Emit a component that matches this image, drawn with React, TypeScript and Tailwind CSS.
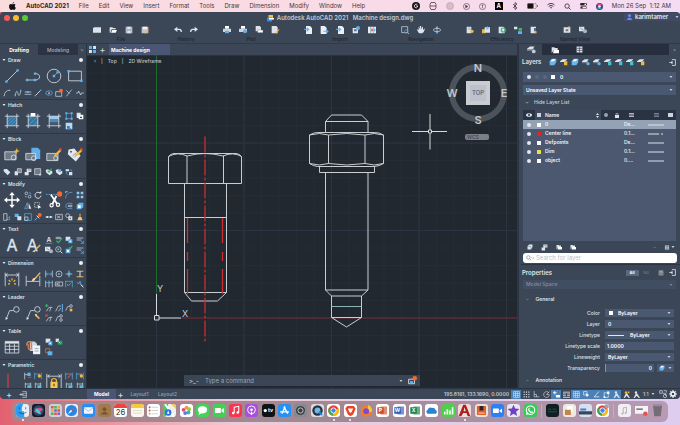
import React, { ReactNode } from "react";
import clsx from "clsx";

const W = "#dde3ea";
const B = "#5eb3ee";
const G = "#3db56c";
const Y = "#f2b73c";
const R = "#e0433c";
const O = "#f4692c";

const pencil = (
  <>
    <path d="M17 3l2 2-6 6-3 1 1-3z" fill={Y} />
    <path d="M16 2l3 3 1-2-2-2z" fill={R} />
  </>
);

const bigIcons: Record<string, ReactNode> = {
  line: (
    <>
      <path d="M3 17L17 3" stroke={W} />
      <path d="M1.500 15.500h3v3h-3zM15.500 1.500h3v3h-3z" fill={B} />
    </>
  ),
  polyline: (
    <>
      <path d="M3 15h10c7 0 7-8 0-8" stroke={W} />
      <path d="M1 13.500h3v3H1zM11 5.500h3v3h-3zM11 13.500h3v3h-3z" fill={B} />
    </>
  ),
  circle: (
    <>
      <circle cx="10" cy="10" r="8.500" stroke={W} />
      <path d="M10 10l5-5" stroke={B} />
      <path d="M8.500 8.500h3v3h-3zM13 4h3v3h-3z" fill={B} />
    </>
  ),
  rectangle: (
    <>
      <path d="M2 4h16v12H2z" stroke={W} />
      <path d="M.5 2.500h3v3h-3zM16.500 14.500h3v3h-3z" fill={B} />
    </>
  ),
  hatch: (
    <>
      <path d="M4 4h12v12H4z" fill="#3c739b" />
      <path d="M4 8l4-4M4 12l8-8M4 16L16 4M8 16l8-8M12 16l4-4" stroke={B} strokeWidth=".7" />
      <path d="M4 1v18M16 1v18M1 4h18M1 16h18" stroke={W} />
    </>
  ),
  boundary: (
    <>
      <path d="M4 4h12v12H4z" fill="#3c739b" />
      <path d="M4 10l6-6M4 16L16 4M10 16l6-6" stroke={B} strokeWidth=".7" />
      <path d="M4 1v18M16 1v18M1 4h18M1 16h18" stroke={W} />
      <path d="M7 0h6v4H7z" fill="#fff" />
    </>
  ),
  gradient: (
    <>
      <path d="M4 4h12v4H4z" fill="#8fcbf3" />
      <path d="M4 8h12v4H4z" fill="#5689b0" />
      <path d="M4 12h12v4H4z" fill="#43576d" />
      <path d="M4 1v18M16 1v18M1 4h18M1 16h18" stroke={W} />
    </>
  ),
  insertBlock: (
    <>
      <path d="M1 6h14v10H1z" fill="#6f7a87" stroke={W} />
      <circle cx="12" cy="13" r="3" stroke={W} />
      <path d="M16 1l1 3 3 1-3 1-1 3-1-3-3-1 3-1z" fill={Y} />
    </>
  ),
  createBlock: (
    <>
      <path d="M8 1h8l3 3v11H8z" fill="#63aee8" />
      <path d="M1 8h12v8H1z" fill="#6f7a87" stroke={W} />
      <circle cx="11" cy="14" r="3" stroke={W} />
    </>
  ),
  editBlock: (
    <>
      <path d="M1 8h14v9H1z" fill="#6f7a87" stroke={W} />
      <circle cx="12" cy="14" r="2.500" stroke={W} />
      {pencil}
    </>
  ),
  editAttribute: (
    <>
      <path d="M2 3l7-1 8 9-6 7L1 9z" fill="#e4e7ea" />
      <circle cx="5" cy="6" r="1.200" fill="#4b5666" />
      <path d="M7 11l5-4M9 13l4-4" stroke="#7d8792" />
      {pencil}
    </>
  ),
  move: (
    <>
      <path d="M10 2v16M2 10h16" stroke="#fff" strokeWidth="1.800" />
      <path d="M10 0l3.500 4h-7zM10 20l3.500-4h-7zM0 10l4-3.500v7zM20 10l-4-3.500v7z" fill="#fff" />
    </>
  ),
  trim: (
    <>
      <path d="M0 3h14" stroke={B} strokeDasharray="2 1" />
      <path d="M6 3l8 12M13 5L8 15" stroke="#fff" strokeWidth="2.200" />
      <circle cx="7" cy="16.500" r="2" stroke="#fff" strokeWidth="1.500" />
      <circle cx="15" cy="16" r="2" stroke="#fff" strokeWidth="1.500" />
      <circle cx="17" cy="2.500" r="3.300" fill={O} />
    </>
  ),
  text: (
    <text x="10" y="17.500" fontSize="20" textAnchor="middle" fill={W} stroke={W} strokeWidth=".5" fontFamily="Inter, sans-serif">
      A
    </text>
  ),
  textStyle: (
    <>
      <text x="9" y="17" fontSize="20" textAnchor="middle" fill={W} stroke={W} strokeWidth=".4" fontFamily="Inter, sans-serif">
        A
      </text>
      <path d="M19 10l-6 6" stroke="#e9b36b" strokeWidth="1.800" />
      <path d="M14 15l-2 4-3-1z" fill="#f3d9a8" />
    </>
  ),
  dimension: (
    <>
      <path d="M1.500 2v17M18.500 2v17M2 5h16M4.500 3L2 5l2.500 2M15.500 3L18 5l-2.500 2" stroke={W} />
      <path d="M10 9v3M6 11l2 2.500M14 11l-2 2.500M5 16h2.500M12.500 16H15" stroke={Y} strokeWidth="1.500" />
    </>
  ),
  dimensionStyle: (
    <>
      <path d="M1.500 6v13M18.500 6v13M2 13h16" stroke={W} />
      <path d="M19 2l-6 7" stroke="#e9b36b" strokeWidth="1.800" />
      <path d="M14 8l-2 4-4 1 2-4z" fill="#f3d9a8" />
    </>
  ),
  leader: (
    <>
      <path d="M3 17L7 7h5" stroke={W} />
      <circle cx="15.500" cy="5.500" r="3.500" stroke={W} />
      <path d="M2 19l0-4 3 1.500z" fill={W} />
    </>
  ),
  leaderStyle: (
    <>
      <path d="M3 17L7 7h5" stroke={W} />
      <circle cx="15.500" cy="5.500" r="3.500" stroke={W} />
      <path d="M2 19l0-4 3 1.500z" fill={W} />
      <path d="M13 12l5 5" stroke="#e9b36b" strokeWidth="2" />
      <path d="M12 11l3 1-1 3z" fill="#f3d9a8" />
    </>
  ),
  table: (
    <>
      <path d="M1.500 3h17v14.500h-17z" stroke={W} />
      <path d="M1.500 4.500h17" stroke={W} strokeWidth="2.500" />
      <path d="M1.500 9h17M1.500 13h17M7 6v11M13 6v11" stroke={W} />
    </>
  ),
  dataLink: (
    <>
      <path d="M6 3h6l3 3v9H6z" fill="#cfd5dc" />
      <path d="M10 8h9v11h-9z" fill="#f1f3f5" />
      <path d="M12 12h5M12 15h5" stroke="#8e98a5" />
      <path d="M2 8c0-6 6-6 6-2v5c0 3-4 3-4 0V6" stroke="#d98250" strokeWidth="1.500" />
    </>
  ),
  constraintLine: <path d="M5 1v18" stroke={R} strokeWidth="1.400" />,
  lock: (
    <>
      <path d="M1 1v18M19 1v18M2 4h16M4.500 2L2 4l2.500 2M15.500 2L18 4l-2.500 2" stroke={W} />
      <path d="M7 12V9.500c0-3.500 6-3.500 6 0V12" stroke={Y} strokeWidth="1.500" />
      <path d="M5.500 11h9v8h-9z" fill="#f5c64d" />
      <path d="M10 13.500v3" stroke="#5b4a1a" strokeWidth="1.500" />
    </>
  ),
};

const smallIcons: Record<string, ReactNode> = {
  arc: <><path d="M2 10c0-5 3-8 8-8" stroke={W} /><path d="M1 9h2v2H1zM9 1h2v2H9z" fill={B} /></>,
  spline: <><path d="M2 10c1-8 3-8 4-3s3 3 4-4" stroke={W} /><path d="M1 8h2v3H1zM9 1h2v3H9z" fill={B} /></>,
  construction: <><path d="M1 4.500h10M1 8h10" stroke={W} /><path d="M4 3h3v3H4z" fill={B} /></>,
  ray: <><path d="M2 10l8-8" stroke={W} strokeWidth="1.300" /><path d="M1 9h2v2H1zM9 1h2v2H9z" fill={B} /></>,
  ellipse: <><ellipse cx="6" cy="6" rx="5" ry="3.300" stroke={B} /><circle cx="6" cy="6" r="1.300" fill={W} /></>,
  wipeout: <><path d="M1 4h9v7H1z" stroke={W} /><circle cx="9" cy="2.500" r="3" fill={O} /></>,
  point: <><path d="M2 2l4 4 4-5M6 6l-4 5" stroke={W} /><path d="M5 5h2v2H5z" fill={B} /></>,
  breakline: <path d="M0 6h3l1-3 3 6 1-3h4" stroke={W} />,
  region: <><path d="M2 2h8v8H2z" stroke={B} /><path d="M.5.5h3v3h-3zM8.500.5h3v3h-3zM.5 8.500h3v3h-3zM8.500 8.500h3v3h-3z" fill={B} /></>,
  docs: <><path d="M1 1h6v8H1z" fill={W} /><path d="M4 4h7v7H4z" fill="#fff" /><path d="M6 7h3v2H6z" fill="#3d4858" /></>,
  cloud: <><path d="M1 1h10v10H1z" fill="#b8d9f1" /><path d="M3 6h4v3h2v1H3z" fill="#2f7fc0" /></>,
  tag: <><path d="M1 2l5-.5 5 5-4 4.500-6-6z" fill={W} /></>,
  attr: <><path d="M1 5h5v6H1z" fill={W} /><path d="M5 1h6v6H5z" stroke={W} fill="#7a8593" /></>,
  attrEdit: <><path d="M1 6h6v5H1zM4 1h7v5H4z" fill={W} /><path d="M6 3h4" stroke="#49566a" /></>,
  editor: <><path d="M1 1h9v9H1z" stroke={W} fill="#6d7888" /><path d="M9 8v4M7 10h4" stroke={W} /></>,
  check: <><path d="M1 3l3-1 7 3v3l-4 3-5-4z" fill={W} /><path d="M4 4l2 2 4-5" stroke={G} strokeWidth="1.800" /></>,
  sync: <><path d="M1 3l3-1 7 3v3l-4 3-5-4z" fill={W} /><path d="M5 2h4v4H5z" fill={B} /></>,
  purge: <><path d="M1 2h5v3H1zM6 6h5v5H6z" fill={W} /><path d="M2 6c0 3 1 4 3 4M7 3h3v2" stroke={B} /></>,
  copy: <><circle cx="3.500" cy="3.500" r="2" stroke={W} /><circle cx="8.500" cy="8.500" r="2" stroke={W} /><path d="M7 3h3v2M5 9H2V7" stroke={B} /></>,
  rotate: <><path d="M9.500 3.500A4.500 4.500 0 1 0 10.500 7" stroke={W} strokeWidth="1.400" /><path d="M7 3.500h4V0z" fill={W} /></>,
  mirror: <><path d="M5 1v9H1z" stroke={B} /><path d="M7 1v9h4z" fill={W} /></>,
  stretch: <><path d="M1 1h7v7H1z" stroke={W} strokeDasharray="2 1" /><path d="M5 4l6 4-3 .5L7 11z" fill="#fff" /></>,
  fillet: <><path d="M1 11C1 5 5 2 11 2" stroke={B} /><path d="M1 3v-2h3" stroke={W} /></>,
  array: <path d="M1 1h4v4H1zM7 1h4v4H7zM1 7h4v4H1zM7 7h4v4H7z" fill="#8bc8f2" />,
  offset: <><path d="M11 2H5c-5 0-5 8 0 8h6" stroke={B} /><path d="M11 5H6c-2 0-2 2 0 2h5" stroke={W} /></>,
  erase: <><path d="M1 4l4-3h6v7l-4 3H1z" fill={B} /><path d="M3 5h4v4H3z" fill="#fff" /></>,
  align: <><path d="M1 1h5v10H1z" stroke={W} /><path d="M5 10l5-5v5z" stroke={B} /></>,
  scale: <><path d="M1 1h6v5H1z" fill={B} /><path d="M5 5h6v6H5z" fill={W} /></>,
  corner: <><path d="M1 1h10v10H1z" stroke={B} /><path d="M1 6h5v5H1z" stroke={W} /></>,
  explode: <><path d="M1 11l4-4" stroke={B} strokeWidth="1.500" /><path d="M4 4l4 4" stroke={W} strokeWidth="1.500" /><circle cx="8.500" cy="3" r="3" fill={O} /></>,
  join: <><path d="M0 6h12" stroke={B} /><path d="M2 4.500h3v3H2zM7 4.500h3v3H7z" fill={W} /></>,
  reverse: <><path d="M1 2h10v8H1z" stroke={W} /><path d="M3 4l5 4M8 4L3 8" stroke={W} /></>,
  divide: <><circle cx="4" cy="4" r="3" stroke={W} /><path d="M5 5h6v6H5z" fill={W} /><path d="M7 7h2v2H7z" fill="#49566a" /></>,
  brush: <><path d="M6 1v5" stroke="#e9b36b" strokeWidth="1.500" /><path d="M4 6h4l2 5H2z" fill="#f2c46f" /></>,
  singleText: <><text x="6" y="9" fontSize="10" fontWeight="600" textAnchor="middle" fill={W} fontFamily="Inter, sans-serif">A</text><path d="M1 11h10" stroke={B} /></>,
  spell: <><path d="M1 2h8M1 4h8" stroke={W} /><path d="M2 7l3 3 6-7" stroke={G} strokeWidth="1.600" /></>,
  field: <><path d="M1 1h7v6H1z" fill={W} /><path d="M5 5h6v6H5z" fill={B} /><path d="M7 7h2v2H7z" fill="#fff" /></>,
  textAlign: <><path d="M1 3h10M1 6h7" stroke={W} /><path d="M7 7l4 4M11 7v4H7" stroke={B} /></>,
  find: <><circle cx="5" cy="5" r="4" stroke={W} /><path d="M8 8l3 3" stroke={W} strokeWidth="1.500" /><circle cx="5" cy="5" r="1.500" fill={B} /></>,
  green: <><path d="M1 4h7v7H1z" fill={B} /><path d="M6 2l2 2 3-4" stroke={G} strokeWidth="1.800" /><path d="M3 6h3v3H3z" fill="#fff" /></>,
  linear: <><path d="M1 1v10M11 1v10" stroke={W} /><path d="M1 6h10M4 4L2 6l2 2M8 4l2 2-2 2" stroke={B} /></>,
  baseline: <><path d="M1 1v10M6 1v10M11 1v10" stroke={W} /><path d="M1 4h10" stroke={B} strokeWidth="1.300" /></>,
  diameter: <><circle cx="6" cy="6" r="4.500" stroke={W} /><circle cx="6" cy="6" r="1.500" fill={B} /></>,
  ordinate: <><path d="M6 1v10M1 6h10" stroke={W} /><path d="M4 4h4v4H4z" fill={B} /></>,
  space: <><path d="M1 2h10M1 10h10" stroke={Y} strokeWidth="1.600" /><path d="M6 2v8" stroke={W} strokeWidth="1.500" /></>,
  tolerance: <><path d="M.5 3h11v6H.5z" stroke={W} /><path d="M6 3v6" stroke={W} /><circle cx="3.300" cy="6" r="1.300" fill={W} /></>,
  inspect: <><path d="M1 1v10M11 1v10M1 2h10" stroke={B} /><path d="M3 6l2 3 4-5" stroke={G} strokeWidth="1.500" /></>,
  jog: <><path d="M1 3l3 3 2-4 2 6 3 1" stroke={B} strokeWidth="1.200" /><path d="M7 7l4 4" stroke={W} strokeWidth="1.400" /></>,
  leaderAdd: <><path d="M2 11l4-6h5M7 11l2-6" stroke={W} /><path d="M2.500 0v5M0 2.500h5" stroke={G} strokeWidth="1.600" /></>,
  leaderRemove: <><path d="M2 11l4-6h5M7 11l2-6" stroke={W} /><path d="M.5.5l3.500 3.500M4 .5L.5 4" stroke={R} strokeWidth="1.600" /></>,
  leaderAlign: <><path d="M1 11l4-8h4M5 11l4-5" stroke={W} /><path d="M11 0v12" stroke={B} strokeWidth="1.500" /></>,
  leaderCollect: <><path d="M1 10l3-6h3" stroke={W} /><circle cx="9" cy="3" r="2" stroke={W} /><path d="M7 7h4v4H7z" fill={Y} /></>,
  leaderPair: <><path d="M1 11l3-7h3" stroke={W} /><circle cx="9" cy="3" r="2" stroke={W} /><circle cx="9" cy="9" r="2" stroke={W} /></>,
  clip: <><path d="M1 1h6v6H1z" stroke="#d98250" /><path d="M4 5h7v6H4z" fill={B} /></>,
  excel: <><path d="M1 1h5v5H1z" fill={W} /><path d="M4 4h7v6H4z" fill="#2f9c62" /><path d="M5 5l3 3" stroke="#fff" /></>,
  geo: <><path d="M1 1v10M1 4h5" stroke={W} /><path d="M5 1h5v5H5z" fill={B} /><path d="M6 8h5" stroke={R} strokeWidth="1.600" /></>,
  bracket: <><path d="M2 1v10M10 1v10M2 3h8" stroke={W} /><path d="M5 5h6v5H5z" fill="#4fc0d9" /></>,
  dimRed: <><path d="M1 1v10M11 1v10M1 3h10" stroke={B} /><path d="M4 9l5-5" stroke={R} strokeWidth="1.800" /></>,
  dimBulb: <><path d="M1 1v10M11 1v10M1 3h8" stroke={B} /><circle cx="8" cy="6" r="2.500" fill={Y} /></>,
  // top toolbar
  newFile: <path d="M0 3l2-1h10v8H0z" fill={W} />,
  open: <><path d="M1 2h4l1 1h4v2H4L2 10H1z" fill={W} /><path d="M5 6h7l-2 4H3z" fill="#fff" /></>,
  save: <><path d="M1 1h10v10H1z" fill="#bfc6cf" /><path d="M3 1h6v4H3zM3 7h6v4H3z" fill="#e9edf1" stroke="#768293" strokeWidth=".6" /></>,
  saveAs: <><path d="M1 1h10v10H1z" fill="#bfc6cf" /><path d="M3 1h6v4H3z" fill="#eef1f4" /><path d="M11 5l-5 6" stroke={Y} strokeWidth="2" /><path d="M11 4l1 1" stroke={R} strokeWidth="2" /></>,
  undo: <><path d="M4 5h4c2 0 3 2 3 4" stroke={W} strokeWidth="2" /><path d="M0 5l5-4v8z" fill={W} /></>,
  redo: <><path d="M8 5H4C2 5 1 7 1 9" stroke={W} strokeWidth="2" /><path d="M12 5L7 1v8z" fill={W} /></>,
  print: <><path d="M3 0h6v4H3z" fill="#fff" /><path d="M0 4h12v5H0z" fill="#cfd5dc" /><path d="M3 7h6v4H3z" fill={B} /></>,
  preview: <><path d="M3 0h6v4H3z" fill="#fff" /><path d="M0 4h12v5H0z" fill="#cfd5dc" /><circle cx="9" cy="8" r="3" fill={B} /></>,
  batch: <><path d="M1 0h6l2 2v6H1z" fill={W} /><path d="M4 6h8v4H4z" fill="#fff" stroke="#55606f" strokeWidth=".6" /></>,
  pageSetup: <><path d="M1 0h7l2 2v9H1z" fill={W} /><path d="M12 5l-5 6" stroke={Y} strokeWidth="2" /><path d="M11 5l1 1" stroke={R} strokeWidth="2" /></>,
  importIn: <><path d="M3 0h6l3 3v9H3z" fill="#edf0f3" /><path d="M0 5h6M4 3l3 2-3 3" stroke={B} strokeWidth="1.600" /></>,
  exportOut: <><path d="M1 0h6l3 3v9H1z" fill="#edf0f3" /><path d="M5 8h6M9 6l3 2-3 3" stroke={B} strokeWidth="1.600" /></>,
  palette: <><path d="M1 3h8v8H1z" fill={W} /><path d="M3 5h4v3H3z" fill="#617084" /><circle cx="9" cy="3" r="3" fill={B} /></>,
  sheets: <><path d="M0 1h12v10H0z" fill="#e9ecef" /><path d="M4 1v10M8 1v10" stroke="#8792a0" /><path d="M5 4h2v4H5z" fill={R} /><path d="M9 4h2v4H9z" fill={B} /></>,
  zoomWindow: <><path d="M1 1h9v9H1z" stroke={W} /><circle cx="8" cy="8" r="2.500" stroke={B} /><path d="M10 10l2 2" stroke={W} /></>,
  hand: <path d="M3 11L0 6l1-1 2 1-1-4h1l2 3-1-5h2l1 5 1-4h1l0 5 2-2 1 0-2 5-2 2z" fill={W} />,
  orbit: <><ellipse cx="6" cy="6" rx="5.500" ry="2.500" stroke={W} /><path d="M6 1v10" stroke={W} /><path d="M6 0l2 3H4zM6 12l2-3H4z" fill={B} /></>,
  bulb: <><path d="M1 1h7v10H1z" fill={W} /><path d="M3 3h4M3 5h4" stroke={B} /><circle cx="9" cy="8" r="2.500" fill={Y} /></>,
  share: <><path d="M0 5h5v6H0z" fill={Y} /><path d="M4 2h8v8H4z" fill={W} /><path d="M8 0v5M6 3l2 2 2-2" stroke={B} /></>,
  refresh: <><path d="M1 1h7l2 2v8H1z" fill={W} /><circle cx="8" cy="6" r="3" stroke={G} strokeWidth="1.800" /></>,
  compare: <><path d="M0 1h5v4H0z" fill={W} /><path d="M7 3h5v4H7z" fill={G} /><path d="M6 8h6v4H6z" fill={B} /></>,
  clean: <><path d="M1 1h8v10H1z" fill={W} /><path d="M6 3h3v5H6z" fill="#5c6878" /><path d="M7 8h3v3H7z" fill="#dca766" /></>,
  viewSave: <><path d="M1 2h10v8H1z" fill={W} /><path d="M4 5h4v3H4z" fill="#6a7788" /><path d="M9 0v4M7 2h4" stroke={Y} strokeWidth="1.300" /></>,
  viewEdit: <><path d="M0 1h8v7H0z" fill={W} /><circle cx="9" cy="8" r="3" fill="#aab4c0" /><path d="M2 3l4 3" stroke="#667385" /></>,
  // layer panel
  layer: <><path d="M1 5l3-4h7v5l-3 5H1z" fill={W} /><path d="M1 5h7v6" stroke="#7f8b9b" /></>,
  layerBlue: <><path d="M1 5l3-4h7v5l-3 5H1z" fill="#6bb6ea" /><path d="M2 5l3-3h5l-3 3z" fill="#fff" /></>,
  layerDot: <><path d="M0 5l4-3h6l-3 4H0z" fill={W} /><path d="M0 7h7l2-3" stroke="#9aa6b5" /><circle cx="9" cy="8.500" r="2.500" fill={B} /></>,
  layerTab: <><path d="M0 5l4-3h6l-3 4H0z" fill={W} /><path d="M0 7h7l2-3" stroke="#9aa6b5" /><circle cx="9" cy="8.500" r="2.500" fill="#c3cad3" /></>,
  layerTeal: <><path d="M0 5l4-3h7l-4 4H0z" fill={W} /><path d="M6 5h5v6H6z" fill="#45c1cf" /></>,
  layerGold: <><path d="M0 5l4-3h7l-4 4H0z" fill={W} /><path d="M6 5h5v6H6z" fill={Y} /></>,
  folder: <><path d="M1 2h4l1 1h4v3H4l-3 5z" fill={W} /><path d="M4 6h8v5H3z" fill="#fff" /></>,
  dock: <><path d="M5 1h6v10H5" stroke={W} strokeWidth="1.400" /><path d="M6 3v6L2 6z" fill={W} /><path d="M0 6h6" stroke={W} /></>,
  list: <><path d="M1 1h10v10H1z" fill={W} /><path d="M1 4h10M1 7.500h10M6 2v9" stroke="#2a3342" /></>,
  grid: <path d="M1 1h10v10H1zM1 4.300h10M1 7.600h10M4.300 1v10M7.600 1v10" stroke={W} />,
  dots: <path d="M1 1h2v2H1zM5 1h2v2H5zM9 1h2v2H9zM1 5h2v2H1zM5 5h2v2H5zM9 5h2v2H9zM1 9h2v2H1zM5 9h2v2H5zM9 9h2v2H9z" fill={W} />,
  ortho: <path d="M2 0v10h9M2 6h4v4" stroke={W} />,
  polar: <><path d="M10 3A5 5 0 1 0 11 7" stroke={W} /><path d="M6 6l5-5M6 6h5" stroke={W} /></>,
  dynamic: <><path d="M3 0v6M0 3h6" stroke="#fff" strokeWidth="1.500" /><path d="M5 7h7v4H5z" fill="#fff" /></>,
  weight: <path d="M0 2h12M0 5h5M7 5h5M0 8h5M7 8h5M0 11h12" stroke={W} strokeWidth="1.400" />,
  panels: <><path d="M4 1h7v10H4M4 4h7M4 8h7" stroke={W} /><path d="M0 6h6M2 4L0 6l2 2" stroke={W} strokeWidth="1.300" /></>,
  snap: <><path d="M1 1h6v6H1z" stroke="#fff" /><path d="M4 4l7 3-3 1-1 3z" fill="#fff" /></>,
  angle: <path d="M2 10h9M2 10l8-9" stroke="#fff" strokeWidth="1.200" />,
  box: <><path d="M2 3h7v8H2z" stroke="#fff" /><path d="M7 1h4v4H7zM1 9h3v3H1z" fill="#fff" /></>,
  person: <><circle cx="5" cy="2.500" r="2" fill={W} /><path d="M5 4l-4 8h2l3-4 4 4h2L7 4z" fill={W} /></>,
  personGold: <><circle cx="5" cy="2.500" r="2" fill={Y} /><path d="M5 4l-4 8h2l3-4 4 4h2L7 4z" fill={W} /><path d="M8 1h3v3H8z" fill={Y} /></>,
  isolate: <><path d="M1 1h4v4H1zM6 5h4v4" stroke={W} /><circle cx="9" cy="9" r="2.500" stroke={W} /><path d="M7 1h4v3" stroke={W} /></>,
  gear: <><circle cx="6" cy="6" r="3" stroke="#fff" strokeWidth="2" /><path d="M6 0v3M6 9v3M0 6h3M9 6h3M2 2l2 2M8 8l2 2M10 2L8 4M4 8l-2 2" stroke="#fff" strokeWidth="1.600" /></>,
};

function Icon({ name, className = "size-[9px]" }: { name: string; className?: string }) {
  const big = name in bigIcons;
  return (
    <svg viewBox={big ? "0 0 20 20" : "0 0 12 12"} fill="none" className={clsx("shrink-0 overflow-visible", className)} aria-hidden="true">
      {big ? bigIcons[name] : smallIcons[name]}
    </svg>
  );
}

const Caret = ({ className = "text-[#c9d1dc]" }: { className?: string }) => (
  <svg viewBox="0 0 6 4" className={clsx("h-[2px] w-[4px] shrink-0", className)} aria-hidden="true">
    <path d="M0 0h6L3 4z" fill="currentColor" />
  </svg>
);

const menus = ["File", "Edit", "View", "Insert", "Format", "Tools", "Draw", "Dimension", "Modify", "Window", "Help"];

function MenuBar() {
  return (
    <header className="flex h-[12px] shrink-0 items-center bg-linear-to-r from-[#fbdcdc] via-[#fadbe6] to-[#f3dcf5] pl-[9px] pr-[9px] text-[6px] leading-[8px] text-[#3f383c]">
      <svg viewBox="0 0 14 16" className="mr-[10px] h-[8px] w-[7px]" aria-label="Apple">
        <path d="M10 0c0 2-1.500 3.500-3 3.500C7 2 8.500.5 10 0zM7 4.500C8 4.500 9 3.700 10.300 3.800c1.200 0 2.200.6 2.900 1.600-2.500 1.500-2 5 .6 6-.8 2.300-2.200 4.400-3.700 4.400-1 0-1.600-.6-2.800-.6s-1.800.6-2.800.6C2.200 15.800 0 12 0 8.800c0-3.200 1.900-4.900 3.900-4.900C5.200 3.900 6 4.500 7 4.500z" fill="#111" />
      </svg>
      <nav className="flex flex-1 gap-[10px]">
        <button className="font-bold text-[#2a2226]">AutoCAD 2021</button>
        {menus.map((menu) => (
          <button key={menu}>{menu}</button>
        ))}
      </nav>
      <div className="flex items-center gap-[9px]">
        <svg viewBox="0 0 16 16" className="size-[8px]"><circle cx="8" cy="8" r="8" fill="#1d181b" /><path d="M11 6a3.500 3.500 0 1 0 0 4V8H8" fill="none" stroke="#fff" strokeWidth="1.500" /></svg>
        <svg viewBox="0 0 16 16" className="size-[8px]" fill="none" stroke="#40373c" strokeWidth="1.500"><path d="M4 1h8l2 4v6l-2 4H4l-2-4V5zM2 8h12" /></svg>
        <svg viewBox="0 0 16 16" className="size-[8px]"><circle cx="8" cy="8" r="7" fill="#d8bdc8" stroke="#ad929d" /></svg>
        <svg viewBox="0 0 16 16" className="size-[7px]" fill="none" stroke="#5a4d54" strokeWidth="1.500"><circle cx="8" cy="8" r="7" /><path d="M6 5l5 3-5 3z" fill="#40373c" /></svg>
        <svg viewBox="0 0 16 16" className="size-[7px]" fill="none" stroke="#5a4d54" strokeWidth="1.500"><circle cx="8" cy="8" r="7" /><path d="M8 4v8M6 5h4" /></svg>
        <span className="flex size-[8px] items-center justify-center bg-black text-[6px] font-bold text-white">A</span>
        <svg viewBox="0 0 12 16" className="h-[8px] w-[6px]" fill="none" stroke="#2c2429" strokeWidth="1.400"><path d="M2 4l8 8-4 3V1l4 3-8 8" /></svg>
        <svg viewBox="0 0 22 12" className="h-[6px] w-[11px]"><rect x=".5" y=".5" width="18" height="11" rx="3" fill="none" stroke="#685a62" /><rect x="1" y="1" width="12" height="10" rx="2" fill="#17120f" /><path d="M20 4v4l2-1V5z" fill="#685a62" /></svg>
        <svg viewBox="0 0 16 12" className="h-[6px] w-[8px]" fill="none" stroke="#2c2429" strokeWidth="1.800"><path d="M1 4c4-4 10-4 14 0M3.500 7c3-2.500 6-2.500 9 0M6 10c1.500-1 2.500-1 4 0" /></svg>
        <svg viewBox="0 0 16 16" className="size-[7px]" fill="none" stroke="#2c2429" strokeWidth="1.800"><circle cx="7" cy="7" r="5" /><path d="M11 11l4 4" /></svg>
        <svg viewBox="0 0 16 14" className="h-[6px] w-[7px]"><rect width="16" height="6" rx="3" fill="#2c2429" /><circle cx="12" cy="3" r="2" fill="#fff" /><rect x=".7" y="8" width="14.600" height="5.500" rx="2.700" fill="none" stroke="#2c2429" strokeWidth="1.400" /><circle cx="4" cy="10.700" r="2" fill="#2c2429" /></svg>
        <svg viewBox="0 0 16 16" className="size-[7px]"><circle cx="8" cy="8" r="8" fill="#4b3b7d" /><path d="M2 5a7 7 0 0 1 12 0z" fill="#e2507e" /><path d="M2 10a7 7 0 0 0 11 2z" fill="#2fb6e6" /><circle cx="8" cy="8" r="3" fill="#fff" /></svg>
        <time className="whitespace-pre">Mon 26 Sep  1:12 AM</time>
      </div>
    </header>
  );
}

const toolGroups = [
  { label: "File", icons: ["newFile", "open", "save", "saveAs"] },
  { label: "History", icons: ["undo", "redo"] },
  { label: "Plot", icons: ["print", "preview", "batch", "pageSetup"] },
  { label: "Import", icons: ["importIn", "exportOut", "importIn", "palette", "sheets"] },
  { label: "Navigation", icons: ["zoomWindow", "hand", "orbit"] },
  { label: "Efficiency", icons: ["bulb", "share", "refresh", "compare", "clean"] },
  { label: "Named View", icons: ["viewSave", "viewEdit"] },
];

function TitleBar() {
  return (
    <div className="flex h-[12px] shrink-0 items-start pl-[4px]">
      <div className="flex w-[52px] gap-[3px] pt-[3px]">
        <button aria-label="Close" className="size-[6px] rounded-full bg-[#fb5a52]" />
        <button aria-label="Minimize" className="size-[6px] rounded-full bg-[#f9bb34]" />
        <button aria-label="Full screen" className="size-[6px] rounded-full bg-[#5cc83b]" />
      </div>
      <h1 className="flex flex-1 items-center justify-center gap-[3px] whitespace-pre pt-[2px] text-[6px] leading-[8px] font-semibold text-[#c3cad4]">
        <svg viewBox="0 0 14 14" className="size-[7px]"><path d="M3 0h9v9H3z" fill="#f2c14a" /><path d="M0 5h10v8H0z" fill="#3a8fd6" /><path d="M4 6h10v3H4z" fill="#fff" /></svg>
        Autodesk AutoCAD 2021   Machine design.dwg
      </h1>
      <button className="mt-[1px] flex h-[8px] w-[56px] items-center gap-[3px] bg-[#414b66] pl-[3px] pr-[1px] text-[6px] leading-[8px] font-semibold text-[#e3e7ee]">
        <svg viewBox="0 0 10 12" className="h-[6px] w-[5px]"><circle cx="5" cy="3" r="3" fill="#5f8df5" /><path d="M0 12c0-7 10-7 10 0z" fill="#5f8df5" /></svg>
        <span className="flex-1 text-left">karimtamer</span>
        <Caret />
      </button>
    </div>
  );
}

function Toolbar() {
  return (
    <div className="flex h-[20px] shrink-0 gap-[17px] border-b border-[#303a49] pl-[89px]">
      {toolGroups.map((group) => (
        <div key={group.label} className="flex flex-col items-center">
          <div className="flex h-[12px]">
            {group.icons.map((icon, i) => (
              <button key={i} aria-label={group.label} className="flex w-[16px] items-center justify-center">
                <Icon name={icon} className="size-[8px]" />
              </button>
            ))}
          </div>
          <span className="text-[5px] leading-[6px] font-medium text-[#1f2733]">{group.label}</span>
        </div>
      ))}
    </div>
  );
}

// icons flow over eight columns, large ones take two columns and two rows
const sections = [
  { title: "Draw", tall: true, icons: ["line", "polyline", "circle", "rectangle", "arc", "spline", "construction", "ray", "ellipse", "wipeout", "point", "breakline"] },
  { title: "Hatch", icons: ["hatch", "boundary", "gradient", "region", "docs", "cloud"] },
  { title: "Block", tall: true, icons: ["insertBlock", "createBlock", "editBlock", "editAttribute", "tag", "attr", "attrEdit", "editor", "check", "sync", "purge"] },
  { title: "Modify", tall: true, icons: ["move", "copy", "rotate", "trim", "fillet", "array", "mirror", "stretch", "offset", "erase", "align", "scale", "corner", "explode", "join", "reverse", "divide", "brush"] },
  { title: "Text", icons: ["text", "textStyle", "singleText", "spell", "field", "textAlign", "viewEdit", "find", "green", "textAlign"] },
  { title: "Dimension", icons: ["dimension", "dimensionStyle", "linear", "diameter", "ordinate", "space", "baseline", "tolerance", "inspect", "jog"] },
  { title: "Leader", icons: ["leader", "leaderStyle", "leaderAdd", "leaderAlign", "leaderCollect", "", "leaderRemove", "leaderPair"] },
  { title: "Table", icons: ["table", "dataLink", "field", "excel", "", "", "clip"] },
  { title: "Parametric", icons: ["constraintLine", "geo", "dimBulb", "lock", "dimRed", "dimBulb", "bracket", "bracket", "bracket", "bracket"] },
];

function ToolPalette() {
  return (
    <aside className="flex w-[87px] shrink-0 flex-col overflow-hidden border-r border-[#2a3340]">
      <div className="flex h-[11px] shrink-0 items-center text-[5px] leading-[6px]">
        <button className="w-[38px] text-center font-bold text-white">Drafting</button>
        <button className="h-full flex-1 bg-[#2c3443] text-center font-medium text-[#aab2bf]">Modeling</button>
        <button aria-label="More palettes" className="w-[8px] text-[#8d97a6]">»</button>
      </div>
      {sections.map((section) => (
        <section key={section.title} className={clsx("shrink-0 border-b border-[#2e3846]", section.tall ? "h-[45px]" : "h-[34px]")}>
          <h2 className="flex h-[10px] items-center gap-[2px] pl-[2px] pr-[3px] text-[5px] leading-[6px] font-semibold text-[#dfe4ea]">
            <Caret className="text-[#e8ecf0]" />
            <span className="flex-1">{section.title}</span>
            <span className="size-[4px] rounded-full bg-[#eef1f4]" />
          </h2>
          <div className={clsx("grid grid-cols-8 pl-[2px] pr-[1px]", section.tall ? "auto-rows-[11px]" : "auto-rows-[10px] pt-[1px]")}>
            {section.icons.map((icon, i) =>
              icon ? (
                <button
                  key={i}
                  aria-label={`${section.title} ${icon}`}
                  className={clsx("flex items-center justify-center", icon in bigIcons && "col-span-2 row-span-2")}
                >
                  <Icon name={icon} className={icon in bigIcons ? "size-[16px]" : "size-[8px]"} />
                </button>
              ) : (
                <span key={i} />
              )
            )}
          </div>
        </section>
      ))}
    </aside>
  );
}

const majorX = [156.5, 244, 331.5, 419, 506.5];
const majorY = [55.5, 143, 230.5, 318];
const minor = Array.from({ length: 26 }, (_, i) => i * 17.5);

function Drawing() {
  return (
    <svg viewBox="87 55 430 333" preserveAspectRatio="xMinYMin slice" className="size-full" fill="none" aria-label="Machine design">
      <g stroke="#242c36" strokeWidth="1">
        {minor.map((d) => (
          <path key={d} d={`M${86.5 + d} 55v333M87 ${55.5 + d}h430`} />
        ))}
      </g>
      <g stroke="#2a3443" strokeWidth="1">
        {majorX.map((x) => <path key={x} d={`M${x} 55v333`} />)}
        {majorY.map((y) => <path key={y} d={`M87 ${y}h430`} />)}
      </g>
      <path d="M156.500 55v239" stroke="#1f6b2b" />
      <path d="M182 318h335" stroke="#74262f" />
      <g stroke="#c9ced3">
        {/* hex bolt */}
        <path d="M168.500 183.500v-27Q170 154 174 153.500h62q4 .5 5.500 3v27zM168.500 156.500q9-5 18.500-.5 18-5 36 0 10-4.500 18.500.5M187 156v27.500M223.500 156v27.500" />
        <path d="M184.500 183.500v109l7 8.500h26l9-8.500v-109M184.500 217.500h42M184.500 292.500h42" />
        {/* threaded pin with nut and washer */}
        <path d="M325.500 132.500v-11l6-6.500h30l6.500 6.500v11M325.500 121.500h42.500" />
        <path d="M309.500 135q4-2.500 8-2.500h57q5 0 9 2.500v28.500q-4 2.500-9 3h-57q-4-.5-8-3zM328.500 135v28.500M365 135v28.500M309.500 135q10-3 19 0 18-3 36.500 0 9-3 18.500 0M309.500 163.500q10 3 19 0 18 3 36.500 0 9 3 18.500 0" />
        <path d="M319.500 166.500v6h55v-6M325.500 172.500V290l6 6v21.500l15 9.500 15-9.500V296l6.500-6V172.500M325.500 290h42.500M331.500 296h30M331.500 317.500h30" />
        <path d="M331.500 306.500h30" stroke="#8fb3b5" />
      </g>
      <g stroke="#cf2d31" strokeWidth="1.300">
        <path d="M205 136.500v206" strokeDasharray="16 2 3 2" />
        <path d="M187.500 218v78M222.500 218v78" strokeDasharray="25 9 9 8" />
      </g>
      <g stroke="#d7dbdf">
        <path d="M154.500 315.500h4.500v4.500h-4.500zM156.500 316v-22M159 318h22" />
        <path d="M412 131.500h16M432 131.500h15M430 114v16M430 133.500v16M428.500 130h3v3h-3z" />
      </g>
      <g fill="#c3c9cf" fontFamily="Inter, sans-serif" fontSize="9">
        <text x="157" y="292">Y</text>
        <text x="182" y="317">X</text>
      </g>
    </svg>
  );
}

function ViewCube() {
  return (
    <div className="absolute top-[5px] right-[7px] flex flex-col items-center gap-[8px]">
      <svg viewBox="0 0 66 66" className="size-[66px]" fontFamily="Inter, sans-serif" fontWeight="600" textAnchor="middle">
        <circle cx="34" cy="33" r="26" fill="none" stroke="#4d535b" strokeWidth="6" />
        <path d="M22 21h24v24H22z" fill="#c9ccd1" />
        <path d="M26 25h16v16H26z" fill="#bcc1cd" />
        <text x="34" y="35" fontSize="6" fill="#535b6a" fontWeight="500">TOP</text>
        <g fontSize="11" fill="#c3c6ca">
          <text x="34" y="12">N</text>
          <text x="60" y="37">E</text>
          <text x="34" y="64">S</text>
          <text x="8" y="37">W</text>
        </g>
      </svg>
      <button className="h-[6px] w-[24px] rounded-[2px] bg-[#7b8088] pl-[2px] text-left text-[5px] leading-[6px] text-[#333b46]">WCS</button>
    </div>
  );
}

function CommandLine() {
  return (
    <form className="absolute bottom-[2px] left-[97px] flex h-[11px] w-[236px] items-center bg-[#3a4555] pr-[3px]" onSubmit={(e) => e.preventDefault()}>
      <span className="w-[21px] pl-[5px] text-[6px] leading-[8px] font-bold text-[#a8b1bd]">&gt;_-</span>
      <input aria-label="Command" placeholder="Type a command" className="min-w-0 flex-1 bg-transparent text-[6px] leading-[8px] outline-none placeholder:text-[#9ca6b3]" />
      <Caret />
      <svg viewBox="0 0 14 14" className="ml-[5px] size-[9px]" fill="none"><path d="M1 5h9v7H1z" stroke={W} strokeWidth="1.400" /><path d="M3 8h5v4H3z" fill={B} /><circle cx="10.500" cy="3.500" r="3.500" fill={O} /></svg>
    </form>
  );
}

function Viewport() {
  return (
    <main className="flex min-w-0 flex-1 flex-col">
      <div className="flex h-[11px] shrink-0 items-center pl-[2px]">
        <svg viewBox="0 0 12 12" className="size-[7px]"><path d="M0 0h5v5H0zM7 7h5v5H7z" fill={B} /><path d="M7 0h5v5H7zM0 7h5v5H0z" fill={W} /></svg>
        <button aria-label="New drawing" className="w-[13px] text-center text-[9px] leading-[10px] text-[#d5dae1]">+</button>
        <button className="h-full w-[61px] bg-[#4a5673] pl-[2px] text-left text-[5px] leading-[6px] font-bold text-white">Machine design</button>
      </div>
      <div className="relative min-h-0 flex-1 overflow-hidden bg-[#212830]">
        <Drawing />
        <div className="absolute top-[3px] left-[7px] flex gap-[5px] text-[5px] leading-[7px] font-medium text-[#bcc3cb]">
          <span>‹</span><span>|</span><button>Top</button><span>|</span><button>2D Wireframe</button>
        </div>
        <ViewCube />
        <CommandLine />
      </div>
    </main>
  );
}

type SelectProps = { label: string; value: string; lead?: ReactNode; className?: string; muted?: boolean };

function Select({ label, value, lead, className, muted }: SelectProps) {
  return (
    <div className={clsx("flex min-w-0 items-center px-[3px] text-[5px] leading-[7px]", muted ? "bg-[#414d61] text-[#7c8899]" : "bg-[#4b5871] text-white", className)}>
      {lead}
      <select aria-label={label} className="min-w-0 flex-1 appearance-none bg-transparent font-semibold outline-none">
        <option>{value}</option>
      </select>
      <Caret className={muted ? "text-[#7c8899]" : "text-[#c9d1dc]"} />
    </div>
  );
}

const layers = [
  { name: "0", color: "bg-white", weight: "De..." },
  { name: "Center line", color: "bg-[#e8221f]", weight: "0.1...", dashed: true },
  { name: "Defpoints", color: "bg-white", weight: "De..." },
  { name: "Dim", color: "bg-[#e9e23a]", weight: "0.1..." },
  { name: "object", color: "bg-white", weight: "0...." },
];

const Dot = ({ className = "bg-[#e3e8ee]" }: { className?: string }) => <span className={clsx("block size-[4px] rounded-full", className)} />;

function LayersPanel() {
  return (
    <section className="flex shrink-0 flex-col">
      <div className="flex h-[11px] items-center">
        <button aria-label="Layers" className="flex w-[21px] justify-center"><Icon name="layerTab" /></button>
        <div className="flex h-full flex-1 items-center gap-[17px] bg-[#272f3e] pl-[9px]">
          <button aria-label="Sheet set"><Icon name="folder" className="size-[8px]" /></button>
          <button aria-label="Properties list"><Icon name="list" className="size-[7px]" /></button>
        </div>
        <button aria-label="Collapse panel" className="w-[11px] text-[5px] leading-[6px] text-[#8d97a6]">»</button>
      </div>
      <div className="flex h-[14px] items-center pl-[1px] pr-[4px]">
        <h2 className="w-[27px] text-[6px] leading-[8px] font-semibold text-[#e1e5ea]">Layers</h2>
        <div className="flex flex-1 gap-[3px]">
          {["layerBlue", "layerGold", "layerBlue", "layerDot", "layerDot", "layerTeal", "layerTeal", "layerTeal", "layerGold"].map((icon, i) => (
            <button key={i} aria-label="Layer tool"><Icon name={icon} className="size-[8px]" /></button>
          ))}
        </div>
        <button aria-label="Undock layers"><Icon name="dock" className="size-[7px]" /></button>
      </div>
      <div className="flex flex-col gap-[3px] pt-[3px] pr-[4px] pl-[2px]">
        <Select
          label="Current layer"
          value="0"
          className="h-[10px]"
          lead={
            <span className="mr-[5px] flex items-center gap-[4px] pl-[1px]">
              <Dot /><Dot className="bg-[#5c6880]" /><Dot className="bg-[#5c6880]" /><span className="size-[4px] bg-white" />
            </span>
          }
        />
        <Select label="Layer state" value="Unsaved Layer State" className="h-[10px]" />
      </div>
      <button className="flex h-[15px] items-center gap-[5px] pl-[4px] text-[5px] leading-[7px] font-medium text-[#c8cfd8]">
        <svg viewBox="0 0 8 5" className="h-[3px] w-[4px]" fill="none"><path d="M1 1l3 3 3-3" stroke="#aeb7c3" strokeWidth="1.500" /></svg>
        Hide Layer List
      </button>
      <div className="mr-[4px] ml-[2px] h-[131px] bg-[#4b5870]">
        <table className="w-full table-fixed border-collapse text-left text-[5px] leading-[7px] text-[#f0f3f6]">
          <colgroup>
            <col className="w-[12px]" /><col className="w-[66px]" /><col className="w-[23px]" /><col className="w-[19px]" /><col />
          </colgroup>
          <thead className="bg-[#2a3344]">
            <tr className="h-[10px]">
              <th aria-label="Visible"><svg viewBox="0 0 12 8" className="ml-[3px] h-[4px] w-[6px]"><ellipse cx="6" cy="4" rx="6" ry="3.500" fill={W} /><circle cx="6" cy="4" r="2" fill="#2a3344" /></svg></th>
              <th className="bg-[#3d485d] font-semibold"><span className="flex items-center gap-[4px] pl-[2px]"><span className="size-[4px] bg-[#cdd4dd]" /><span className="flex-1">Name</span><svg viewBox="0 0 6 10" className="mr-[2px] h-[5px] w-[3px]"><path d="M0 4h6L3 0zM0 6h6l-3 4z" fill={W} /></svg></span></th>
              <th aria-label="Freeze and lock"><span className="flex items-center gap-[7px] pl-[3px]"><Dot className="bg-[#97a2b1]" /><svg viewBox="0 0 8 10" className="h-[5px] w-[4px]" fill="none"><path d="M0 4h8v6H0z" fill={W} /><path d="M2 4V1h4v3" stroke={W} /></svg></span></th>
              <th aria-label="Lineweight"><svg viewBox="0 0 10 8" className="ml-[5px] h-[4px] w-[5px]"><path d="M0 1h10M0 4h10M0 7h10" stroke={W} strokeWidth="1.500" /></svg></th>
              <th aria-label="Linetype"><span className="flex justify-between pr-[3px] pl-[11px]"><svg viewBox="0 0 10 8" className="h-[4px] w-[5px]"><path d="M0 1h10M0 4h10M0 7h10" stroke="#8d99aa" strokeWidth="1.500" /></svg><span className="h-[4px] w-[5px] bg-[#cdd4dd]" /></span></th>
            </tr>
          </thead>
          <tbody>
            {layers.map((layer, i) => (
              <tr key={layer.name} className={clsx("h-[9px]", i === 0 && "bg-[#94a2b5]")}>
                <td><Dot className="ml-[4px] bg-[#e3e8ee]" /></td>
                <td className="font-semibold"><span className="flex items-center gap-[4px] pl-[2px]"><span className={clsx("size-[4px]", layer.color)} />{layer.name}</span></td>
                <td />
                <td className="font-medium">{layer.weight}</td>
                <td><svg viewBox="0 0 16 2" className="ml-[5px] h-[2px] w-[16px]"><path d="M0 1h16" stroke="#dbe1e8" strokeDasharray={layer.dashed ? "11 2 2 1" : undefined} /></svg></td>
              </tr>
            ))}
          </tbody>
        </table>
      </div>
      <div className="flex h-[12px] items-center gap-[8px] pl-[6px] pr-[5px]">
        <button aria-label="New layer"><Icon name="layer" className="size-[6px]" /></button>
        <button aria-label="Duplicate layer"><Icon name="attrEdit" className="size-[7px]" /></button>
        <button aria-label="Open states"><Icon name="folder" className="size-[6px]" /></button>
        <button aria-label="Save states"><Icon name="folder" className="size-[6px]" /></button>
        <span className="flex-1 text-right text-[5px] leading-[6px] text-[#8e99a8]">–</span>
        <button aria-label="List options" className="flex items-center gap-[1px]"><Icon name="list" className="h-[5px] w-[6px]" /><Caret /></button>
      </div>
      <label className="mr-[3px] ml-[2px] flex h-[10px] items-center gap-[2px] rounded-[3px] bg-white pl-[3px]">
        <svg viewBox="0 0 14 10" className="h-[6px] w-[8px]" fill="none" stroke="#6b7480"><circle cx="4" cy="4" r="3" /><path d="M6 6l3 3M10 4l2 2 2-2" /></svg>
        <input aria-label="Search for layer" placeholder="Search for layer" className="min-w-0 flex-1 text-[6px] leading-[8px] outline-none placeholder:text-[#b9bfc7]" />
      </label>
    </section>
  );
}

function PropertyRow({ label, children }: { label: string; children: ReactNode }) {
  return (
    <div className="flex h-[8px] items-center gap-[5px]">
      <span className="w-[79px] text-right text-[5px] leading-[7px] font-medium text-[#dbe0e7]">{label}</span>
      {children}
    </div>
  );
}

function PropertiesPanel() {
  return (
    <section className="mt-[1px] flex min-h-0 flex-1 flex-col overflow-hidden border-t border-[#2c3543]">
      <div className="flex h-[15px] shrink-0 items-center pl-[1px] pr-[4px]">
        <h2 className="flex-1 text-[6px] leading-[8px] font-semibold text-[#dfe4ea]">Properties</h2>
        <button className="h-[6px] w-[13px] bg-[#5a6781] text-center text-[4px] leading-[6px] font-bold text-white">All</button>
        <button className="ml-[5px] text-[4px] leading-[6px] text-[#77849a]">No</button>
        <button aria-label="Quick select" className="ml-[9px] opacity-50"><Icon name="saveAs" className="size-[6px]" /></button>
        <button aria-label="Undock properties" className="ml-[5px]"><Icon name="dock" className="size-[7px]" /></button>
      </div>
      <Select label="Selection" value="Model Space" muted className="mr-[4px] ml-[2px] h-[9px] shrink-0" />
      <h3 className="flex h-[20px] shrink-0 items-center gap-[7px] pl-[5px] text-[5px] leading-[7px] font-semibold text-[#dfe4ea]"><span className="text-[#8590a0]">–</span>General</h3>
      <div className="flex shrink-0 flex-col gap-[3px] pr-[6px]">
        <PropertyRow label="Color">
          <Select label="Color" value="ByLayer" className="h-full flex-1" lead={<span className="mr-[5px] ml-[1px] size-[4px] bg-white" />} />
        </PropertyRow>
        <PropertyRow label="Layer"><Select label="Layer" value="0" className="h-full flex-1" /></PropertyRow>
        <PropertyRow label="Linetype">
          <Select label="Linetype" value="ByLayer" className="h-full flex-1" lead={<span className="mr-[6px] h-px w-[16px] bg-[#e3e8ee]" />} />
        </PropertyRow>
        <PropertyRow label="Linetype scale">
          <input aria-label="Linetype scale" defaultValue="1.0000" className="h-full min-w-0 flex-1 bg-[#4b5871] px-[2px] text-[5px] leading-[7px] font-semibold text-white outline-none" />
        </PropertyRow>
        <PropertyRow label="Lineweight"><Select label="Lineweight" value="ByLayer" className="h-full flex-1" /></PropertyRow>
        <PropertyRow label="Transparency">
          <div className="flex h-full min-w-0 flex-1 gap-[3px]">
            <input aria-label="Transparency" defaultValue="0" className="h-full min-w-0 flex-1 border-l border-[#5f9be0] bg-[#4b5871] px-[2px] text-right text-[5px] leading-[7px] font-semibold text-white outline-none" />
            <button aria-label="Transparency source" className="flex w-[17px] items-center justify-between bg-[#4b5871] px-[2px]"><Icon name="layerBlue" className="size-[6px]" /><Caret /></button>
          </div>
        </PropertyRow>
      </div>
      <h3 className="flex h-[16px] shrink-0 items-center gap-[7px] pl-[5px] text-[5px] leading-[7px] font-semibold text-[#dfe4ea]"><span className="text-[#8590a0]">–</span>Annotation</h3>
    </section>
  );
}

const toggles = [
  { icon: "grid", on: true },
  { icon: "dots" },
  { icon: "ortho" },
  { icon: "polar" },
  { icon: "dynamic", on: true },
  { icon: "weight" },
  { icon: "grid", on: true },
  { icon: "snap", on: true },
  { icon: "angle", on: true },
  { icon: "box", on: true },
  { icon: "person", on: true },
  { icon: "personGold" },
  { icon: "person" },
];

function StatusBar() {
  return (
    <footer className="flex h-[11px] shrink-0 items-center border-t border-[#2c3543] text-[5px] leading-[7px] font-medium text-[#98a2b0]">
      <div className="flex w-[87px] items-center gap-[8px] pl-[6px]">
        <button aria-label="Add panel" className="text-[9px] leading-[9px] text-[#d5dae1]">+</button>
        <button aria-label="Panel options"><Icon name="panels" className="size-[7px]" /></button>
      </div>
      <button className="h-full w-[29px] bg-[#4a5673] text-center font-bold text-white">Model</button>
      <button aria-label="New layout" className="w-[9px] text-[9px] leading-[9px] text-[#d5dae1]">+</button>
      <button className="w-[29px] text-center">Layout1</button>
      <button className="w-[27px] text-center">Layout2</button>
      <span className="flex-1 pr-[2px] text-right font-semibold text-[#c3cad3]">195.8161, 133.1690, 0.0000</span>
      {toggles.map((toggle, i) => (
        <button key={i} aria-label={toggle.icon} aria-pressed={!!toggle.on} className={clsx("flex h-[9px] w-[10px] items-center justify-center", toggle.on && "bg-[#4a80b5]")}>
          <Icon name={toggle.icon} className="size-[7px]" />
        </button>
      ))}
      <button className="flex w-[14px] items-center justify-between pl-[2px] text-[#c3cad3]">1:1<Caret /></button>
      <button aria-label="Isolate objects" className="ml-[3px] flex w-[9px] justify-center"><Icon name="isolate" className="size-[8px]" /></button>
      <button aria-label="Settings" className="ml-[2px] mr-[3px] flex w-[8px] justify-center"><Icon name="gear" className="size-[8px]" /></button>
    </footer>
  );
}

type DockApp = { name: string; bg: string; art: ReactNode; running?: boolean };

const word = (letter: string, fill: string) => (
  <>
    <path d="M7 4h10v12H7z" fill={fill} opacity=".65" />
    <path d="M2 5h10v10H2z" fill={fill} />
    <text x="7" y="13" fontSize="8" fontWeight="700" textAnchor="middle" fill="#fff" fontFamily="Inter, sans-serif">{letter}</text>
  </>
);

const chrome = (
  <>
    <circle cx="10" cy="10" r="8" fill="#e84335" />
    <path d="M10 10L3 6a8 8 0 0 0 6 12z" fill="#34a853" />
    <path d="M10 10l8-3a8 8 0 0 1-9 11z" fill="#fbbc05" />
    <circle cx="10" cy="10" r="4" fill="#4285f4" stroke="#fff" strokeWidth="1.300" />
  </>
);

const dockApps: DockApp[] = [
  { name: "Finder", bg: "bg-[#e8eef5]", running: true, art: <><path d="M0 3q0-3 3-3h8q-3 6-2 11h3q0 5 1 9H3q-3 0-3-3z" fill="#2a9df4" /><path d="M5 5v3M15 5v3M4 13q6 4 12 0" stroke="#123a66" fill="none" /></> },
  { name: "Siri", bg: "bg-[#17182c]", art: <><circle cx="10" cy="10" r="8" fill="#2a4a74" /><path d="M3 12q6-10 14-4-5 8-14 4z" fill="#e2497e" /><path d="M5 7q5 0 9 8-7 2-9-8z" fill="#44d1c7" /></> },
  { name: "Launchpad", bg: "bg-[#cdd1d8]", art: <><path d="M3 3h4v4H3zM13 8h4v4h-4zM8 13h4v4H8z" fill="#e8524a" /><path d="M8 3h4v4H8zM3 13h4v4H3z" fill="#4bb859" /><path d="M13 3h4v4h-4zM3 8h4v4H3z" fill="#f0a83a" /><path d="M8 8h4v4H8zM13 13h4v4h-4z" fill="#7a63cf" /></> },
  { name: "Safari", bg: "bg-[#e6edf4]", art: <><circle cx="10" cy="10" r="8.500" fill="#2188ea" /><path d="M16 4l-5 7-2-2z" fill="#f3453b" /><path d="M4 16l5-7 2 2z" fill="#fff" /></> },
  { name: "Mail", bg: "bg-[#2b8df2]", art: <><rect x="3" y="5" width="14" height="10" rx="1" fill="#f2f7fd" /><path d="M3 6l7 5 7-5" stroke="#6aa8e6" fill="none" /></> },
  { name: "Contacts", bg: "bg-[#a37a4e]", art: <><circle cx="10" cy="8" r="3" fill="#78552f" /><path d="M4 16q6-8 12 0z" fill="#78552f" /></> },
  { name: "Calendar", bg: "bg-white", art: <><path d="M0 3q0-3 3-3h14q3 0 3 3v3H0z" fill="#f0433a" /><text x="10" y="17" fontSize="12" textAnchor="middle" fill="#333" fontFamily="Inter, sans-serif">26</text></> },
  { name: "Notes", bg: "bg-[#fbf8ee]", art: <><path d="M0 3q0-3 3-3h14q3 0 3 3v3H0z" fill="#f7c93b" /><path d="M3 10h14M3 14h14" stroke="#cfcabb" /></> },
  { name: "Reminders", bg: "bg-white", art: <><path d="M7 5h10M7 10h10M7 15h10" stroke="#b7bac0" /><circle cx="4" cy="5" r="1.500" fill="#3a86f0" /><circle cx="4" cy="10" r="1.500" fill="#f0453a" /><circle cx="4" cy="15" r="1.500" fill="#f2a33a" /></> },
  { name: "Maps", bg: "bg-[#eef2ea]", art: <><path d="M0 0h8L4 20H0z" fill="#58c468" /><path d="M12 0h8v8z" fill="#f6cf4c" /><path d="M3 0l14 20" stroke="#fff" strokeWidth="3" /><circle cx="8" cy="13" r="5" fill="#2f6fe4" /><path d="M8 10l2 5H6z" fill="#fff" /></> },
  { name: "Photos", bg: "bg-white", art: <><circle cx="10" cy="5.500" r="3" fill="#f39a3a" /><circle cx="14" cy="8" r="3" fill="#9ccb45" /><circle cx="13" cy="13" r="3" fill="#3db5a6" /><circle cx="8" cy="14" r="3" fill="#5a7ae0" /><circle cx="5.500" cy="9" r="3" fill="#d8507f" /></> },
  { name: "Messages", bg: "bg-[#47d05a]", art: <><ellipse cx="10" cy="9" rx="7" ry="5.500" fill="#fff" /><path d="M5 12l-1 5 5-3z" fill="#fff" /></> },
  { name: "FaceTime", bg: "bg-[#45cf56]", art: <path d="M3 6h9v8H3zM13 9l4-3v8l-4-3z" fill="#fff" /> },
  { name: "Music", bg: "bg-[#f7354f]", art: <><path d="M8 14V5l7-1.500V13" stroke="#fff" strokeWidth="1.600" fill="none" /><circle cx="6.500" cy="14" r="2" fill="#fff" /><circle cx="13.500" cy="13" r="2" fill="#fff" /></> },
  { name: "Podcasts", bg: "bg-[#a84fdd]", art: <><circle cx="10" cy="9" r="6" fill="none" stroke="#fff" strokeWidth="1.400" /><circle cx="10" cy="9" r="2" fill="#fff" /><path d="M9 12h2v5H9z" fill="#fff" /></> },
  { name: "TV", bg: "bg-[#101114]", art: <><circle cx="5" cy="10" r="2.500" fill="#fff" /><text x="13" y="13" fontSize="8" fontWeight="700" textAnchor="middle" fill="#fff" fontFamily="Inter, sans-serif">tv</text></> },
  { name: "App Store", bg: "bg-[#2492f4]", art: <path d="M11 4L6 15M9 4l6 11M3 12h14" stroke="#fff" strokeWidth="2" /> },
  { name: "System Preferences", bg: "bg-[#85898f]", art: <><circle cx="10" cy="10" r="7.500" fill="#3c4044" stroke="#c3c6c9" strokeDasharray="1.500 1" /><circle cx="10" cy="10" r="4" fill="none" stroke="#c3c6c9" strokeWidth="1.500" /></> },
  { name: "QuickTime", bg: "bg-[#d9dde2]", art: <><circle cx="10" cy="10" r="8" fill="#2c3138" /><circle cx="10" cy="10" r="4.500" fill="#6fb7ec" /><path d="M12 12l5 5" stroke="#2a85d8" strokeWidth="3" /></> },
  { name: "Chrome", bg: "bg-white", running: true, art: chrome },
  { name: "Brave", bg: "bg-white", running: true, art: <><path d="M5 3h10l3 4-4 9-4 3-4-3L2 7z" fill="#ee4225" /><path d="M6 7h8l-2 5-2 2-2-2z" fill="#fff" /></> },
  { name: "Firefox", bg: "bg-transparent", art: <><circle cx="10" cy="10.500" r="9" fill="#f47b29" /><path d="M13 1q7 5 5 11-6 2-7-3z" fill="#fbc53c" /><circle cx="9.500" cy="11" r="4.500" fill="#7a4bd0" /></> },
  { name: "PowerPoint", bg: "bg-white", art: word("P", "#d0502c") },
  { name: "Word", bg: "bg-white", art: word("W", "#2a5eb8") },
  { name: "Excel", bg: "bg-white", art: word("X", "#1f8048") },
  { name: "OneDrive", bg: "bg-white", art: <path d="M4 15q-4-3 0-6 2-5 7-3 4-1 5 3 4 2 1 6z" fill="#2a84d2" /> },
  { name: "Numbers", bg: "bg-[#4fd04b]", art: <path d="M3 12h2.500v4H3zM7 8h2.500v8H7zM11 10h2.500v6H11zM15 5h2.500v11H15z" fill="#fff" /> },
  { name: "AutoCAD", bg: "bg-[#f3dcd8]", running: true, art: <path d="M1 19L8 1h4l7 18h-4l-2-5H8l-3 5zM8.500 11h3.500L10 5z" fill="#a81f24" /> },
  { name: "Archive", bg: "bg-[#e9e2dd]", art: <><path d="M3 3h14v14H3z" fill="#e2622c" /><path d="M7 3h6v7H7z" fill="#33231c" /><path d="M5 14h10" stroke="#fff" /></> },
  { name: "Zoom", bg: "bg-[#2d7ff5]", art: <path d="M3 7h9v7H3zM13 10l4-3v7l-4-3z" fill="#fff" /> },
  { name: "iMovie", bg: "bg-[#ebe6f2]", art: <path d="M10 1l2.500 6 6.500.5-5 4.500 1.500 6.500L10 15l-5.500 3.500L6 12 1 7.500 7.500 7z" fill="#6b42c4" /> },
  { name: "WhatsApp", bg: "bg-[#35cb57]", art: <><circle cx="10" cy="9.500" r="6.500" fill="none" stroke="#fff" strokeWidth="1.700" /><path d="M3 17l1.500-5L8 15.500zM7 6l2 1-1 2 3 3 2-1 1 2q-3 2-6-1T7 6z" fill="#fff" /></> },
];

const dockWindows: DockApp[] = [
  { name: "Terminal", bg: "bg-[#0f1f22]", art: <path d="M3 8h5M3 12h14M10 8h6" stroke="#2f6f62" /> },
  { name: "Document", bg: "bg-[#efe9e2]", art: <><path d="M6 3h9v9H6z" fill="#fff" /><path d="M3 9h9v8H3z" fill="#c08547" /></> },
  { name: "Preview", bg: "bg-[#d6e0ef]", art: <><path d="M0 11h20v5H0z" fill="#37465a" /><path d="M2 7h9v3H2z" fill="#4b7bd0" /></> },
  { name: "Chrome profile", bg: "bg-white", art: <>{chrome}<circle cx="16.500" cy="3.500" r="3.500" fill="#a9a2aa" /></> },
];

const dockFiles: DockApp[] = [
  { name: "Audio file", bg: "bg-[#f1eff1]", art: <path d="M8 14V6l5-1v8M8 14q-3 0-2 1.500T8 14M13 13q-3 0-2 1.500T13 13" stroke="#9b959c" fill="none" /> },
  { name: "Window", bg: "bg-transparent", art: <><path d="M0 3h20v12H0z" fill="#f5f4f6" /><path d="M2 8h10" stroke="#5a5560" strokeWidth="2" /><circle cx="16" cy="15" r="3.500" fill="#e2574c" /></> },
  { name: "Trash", bg: "bg-transparent", art: <><path d="M3 1h14l-2 18H5z" fill="#756c78" /><ellipse cx="10" cy="2" rx="7" ry="1.500" fill="#96909b" /></> },
];

function DockIcon({ app }: { app: DockApp }) {
  return (
    <button aria-label={app.name} className="flex flex-col items-center gap-[2px] pt-[3px]">
      <span className={clsx("block size-[13px] overflow-hidden rounded-[3px]", app.bg)}>
        <svg viewBox="0 0 20 20" className="size-full" aria-hidden="true">{app.art}</svg>
      </span>
      <span className={clsx("size-[2px] rounded-full", app.running && "bg-white")} />
    </button>
  );
}

function Dock() {
  return (
    <div className="flex h-[26px] shrink-0 items-start px-[12px] pt-[2px]">
      <div className="flex h-[21px] flex-1 items-start justify-between rounded-[6px] bg-linear-to-r from-[#a9858d] via-[#a08993] to-[#b89bb4] px-[4px]">
        {dockApps.map((app) => <DockIcon key={app.name} app={app} />)}
        <span className="mx-px mt-[3px] h-[14px] w-px bg-[#c5aebb]" />
        {dockWindows.map((app) => <DockIcon key={app.name} app={app} />)}
        <span className="mx-px mt-[3px] h-[14px] w-px bg-[#c5aebb]" />
        {dockFiles.map((app) => <DockIcon key={app.name} app={app} />)}
      </div>
    </div>
  );
}

function App() {
  return (
    <div className="flex h-screen flex-col overflow-hidden bg-linear-to-r from-[#e2606f] via-[#ecccd8] via-35% to-[#dfcdf0] font-['Inter','Liberation_Sans',sans-serif]">
      <MenuBar />
      <div className="flex min-h-0 flex-1 flex-col overflow-hidden rounded-[4px] bg-[#3b4656]">
        <TitleBar />
        <Toolbar />
        <div className="flex min-h-0 flex-1">
          <ToolPalette />
          <Viewport />
          <aside className="flex w-[163px] shrink-0 flex-col overflow-hidden border-l-2 border-[#2d3644] pl-[2px]">
            <LayersPanel />
            <PropertiesPanel />
          </aside>
        </div>
        <StatusBar />
      </div>
      <Dock />
    </div>
  );
}

export default App;
